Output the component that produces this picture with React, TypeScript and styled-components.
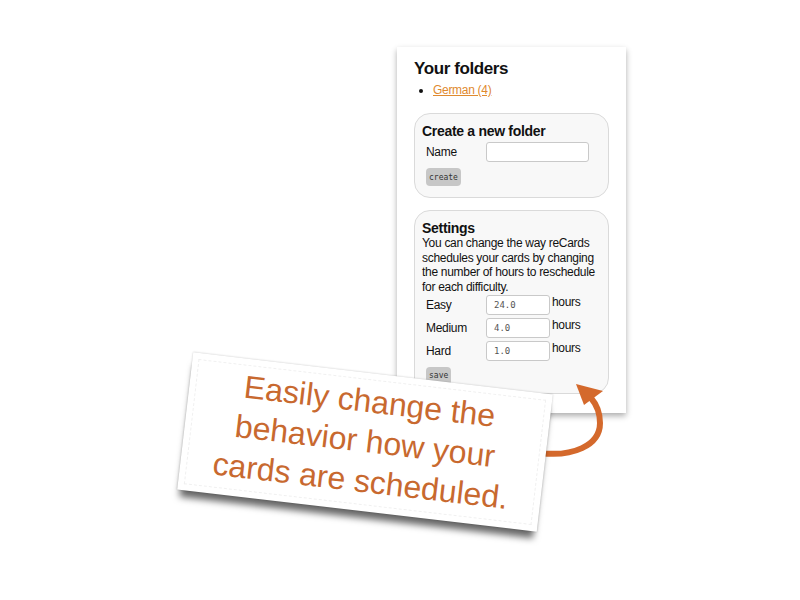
import React from 'react';
import styled, {createGlobalStyle} from 'styled-components';

const GlobalStyle = createGlobalStyle`
  *, *::before, *::after {
    box-sizing: border-box;
  }
  html, body {
    margin: 0;
    padding: 0;
    background: #ffffff;
  }
  body {
    font-family: 'Liberation Sans', Arial, sans-serif;
  }
`;

const Stage = styled.div`
  position: relative;
  width: 800px;
  height: 600px;
  overflow: hidden;
  padding: 47px 0 0 397px;
`;

const Page = styled.div`
  position: relative;
  z-index: 0;
  width: 229px;
  height: 366px;
  background: #ffffff;
  box-shadow: 0 3px 6px rgba(0, 0, 0, 0.32);
  padding: 12px 17px 0 17px;
  display: flex;
  flex-direction: column;
  color: #111;
  letter-spacing: -0.3px;
`;

const Heading = styled.h2`
  margin: 0;
  font-size: 17px;
  line-height: 20px;
  font-weight: bold;
  letter-spacing: -0.4px;
`;

const FolderList = styled.ul`
  margin: 4px 0 0 0;
  padding-left: 19px;
  font-size: 12px;
  line-height: 14px;
`;

const FolderLink = styled.a`
  color: #df8a2f;
  text-decoration: underline;
`;

const Box = styled.div<{$top: number; $height: number}>`
  margin-top: ${p => p.$top}px;
  height: ${p => p.$height}px;
  border: 1px solid #dadada;
  border-radius: 16px;
  background: #f8f8f8;
  padding: 9px 8px 0 7px;
  display: flex;
  flex-direction: column;
`;

const BoxTitle = styled.h3`
  margin: 0;
  font-size: 14px;
  line-height: 16px;
  font-weight: bold;
  letter-spacing: -0.3px;
`;

const Text = styled.p`
  margin: 0;
  font-size: 12px;
  line-height: 14.7px;
`;

const FieldRow = styled.div<{$gap: number}>`
  display: grid;
  grid-template-columns: 60px 66px auto;
  align-items: start;
  margin-top: ${p => p.$gap}px;
  padding-left: 4px;
  font-size: 12px;
`;

const Label = styled.span`
  line-height: 20px;
`;

const Field = styled.div<{$width: number}>`
  width: ${p => p.$width}px;
  height: 20px;
  border: 1px solid #c9c9c9;
  border-radius: 3px;
  background: #ffffff;
  font-family: 'DejaVu Sans Mono', monospace;
  font-size: 9px;
  letter-spacing: 0;
  color: #555;
  line-height: 18px;
  padding-left: 7px;
`;

const Unit = styled.span`
  line-height: 12px;
  margin-top: 1px;
`;

const SmallButton = styled.button<{$gap: number}>`
  align-self: flex-start;
  margin: ${p => p.$gap}px 0 0 4px;
  height: 18px;
  padding: 0 3px;
  border: none;
  border-radius: 4px;
  background: #c7c7c7;
  font-family: 'DejaVu Sans Mono', monospace;
  font-size: 8px;
  color: #333;
`;

const Arrow = styled.svg`
  position: absolute;
  left: 0;
  top: 0;
  z-index: 1;
  pointer-events: none;
`;

const Note = styled.div`
  position: absolute;
  z-index: 2;
  left: 184px;
  top: 373px;
  width: 362px;
  height: 138px;
  background: #ffffff;
  transform: rotate(6.7deg);
  box-shadow: 0 10px 7px -3px rgba(0, 0, 0, 0.6), 0 0 2px rgba(0, 0, 0, 0.25);
  display: flex;
  align-items: center;
  justify-content: center;
  &::after {
    content: '';
    position: absolute;
    inset: 6px;
    border: 1px dashed #f0f0f0;
  }
`;

const NoteText = styled.div`
  font-family: 'Liberation Sans', Arial, sans-serif;
  font-size: 32px;
  line-height: 40px;
  color: #c8692f;
  text-align: center;
  margin-top: -2px;
`;

const hours = [
    {label: 'Easy', value: '24.0'},
    {label: 'Medium', value: '4.0'},
    {label: 'Hard', value: '1.0'},
];

export default function App() {
    return (
        <Stage>
            <GlobalStyle/>
            <Page>
                <Heading>Your folders</Heading>
                <FolderList>
                    <li><FolderLink href="#">German (4)</FolderLink></li>
                </FolderList>

                <Box $top={16} $height={85}>
                    <BoxTitle>Create a new folder</BoxTitle>
                    <FieldRow $gap={3}>
                        <Label>Name</Label>
                        <Field $width={103}/>
                    </FieldRow>
                    <SmallButton $gap={6}>create</SmallButton>
                </Box>

                <Box $top={12} $height={184}>
                    <BoxTitle>Settings</BoxTitle>
                    <Text>
                        You can change the way reCards schedules your cards by changing
                        the number of hours to reschedule for each difficulty.
                    </Text>
                    {hours.map((h, i) => (
                        <FieldRow key={h.label} $gap={i === 0 ? 0 : 3}>
                            <Label>{h.label}</Label>
                            <Field $width={64}>{h.value}</Field>
                            <Unit>hours</Unit>
                        </FieldRow>
                    ))}
                    <SmallButton $gap={6}>save</SmallButton>
                </Box>
            </Page>

            <Arrow width="800" height="600" viewBox="0 0 800 600">
                <path
                    d="M 540 453 C 572 457, 600 446, 600 423 C 600 412, 597 405, 591 398"
                    fill="none"
                    stroke="#d4692c"
                    strokeWidth="6"
                    strokeLinecap="round"
                />
                <polygon points="576,384 603,391 584,405" fill="#d4692c"/>
            </Arrow>

            <Note>
                <NoteText>
                    Easily change the<br/>
                    behavior how your<br/>
                    cards are scheduled.
                </NoteText>
            </Note>
        </Stage>
    );
}
